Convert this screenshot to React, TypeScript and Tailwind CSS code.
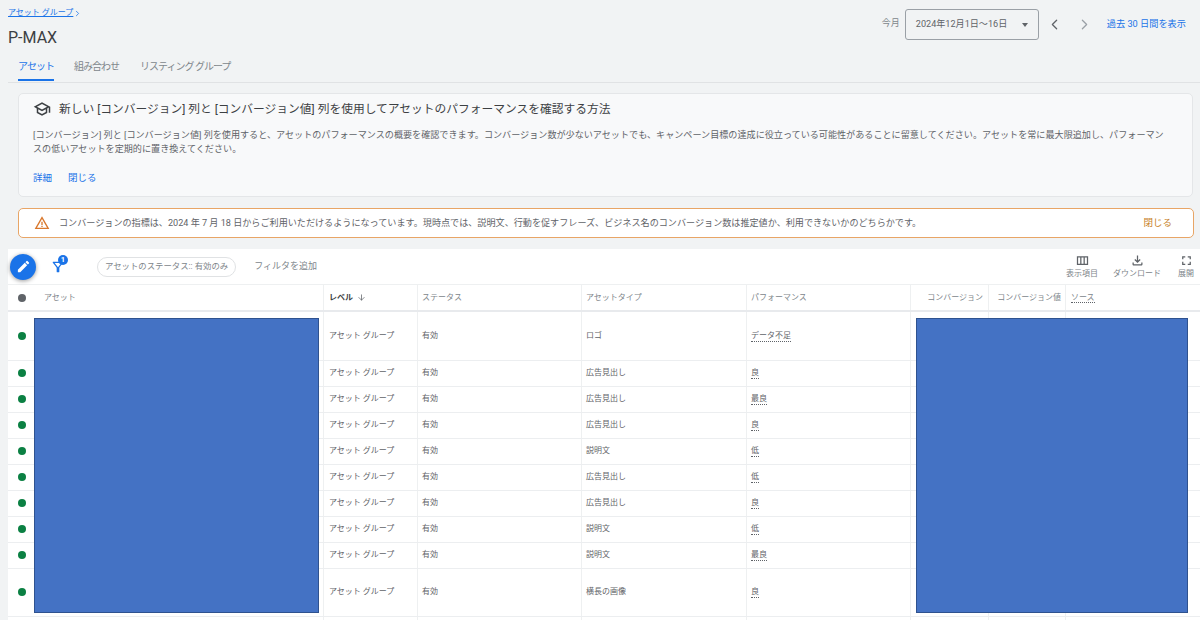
import { ChevronLeft, ChevronRight, ArrowDown } from 'lucide-react';
import { MdEdit, MdOutlineFileDownload, MdFullscreen, MdOutlineFilterAlt, MdOutlineSchool, MdOutlineViewColumn, MdWarningAmber } from 'react-icons/md';

const rows = [
  { type: 'ロゴ', perf: 'データ不足', tall: true },
  { type: '広告見出し', perf: '良' },
  { type: '広告見出し', perf: '最良' },
  { type: '広告見出し', perf: '良' },
  { type: '説明文', perf: '低' },
  { type: '広告見出し', perf: '低' },
  { type: '広告見出し', perf: '良' },
  { type: '説明文', perf: '低' },
  { type: '説明文', perf: '最良' },
  { type: '横長の画像', perf: '良', tall: true },
];

const gridCols = 'grid grid-cols-[315px_94px_164px_165px_164px_78px_77px_135px]';

const App = () => {
  return (
    <div className="w-[1200px] h-[620px] overflow-hidden bg-[#f1f3f4] font-['Roboto','Noto_Sans_CJK_JP',sans-serif] text-[#5f6368]">
      {/* Header */}
      <div className="h-[83px] ml-2 flex justify-between border-b border-[#e0e2e4]">
        <div>
          <div className="pt-[6px] flex items-center text-[8px] leading-[14px] text-[#1a73e8]">
            <span className="underline">アセット グループ</span>
            <ChevronRight size={9} strokeWidth={2} />
          </div>
          <div className="mt-[7px] text-[16px] leading-[22px] text-[#3c4043]">P-MAX</div>
          <div className="mt-[8px] flex text-[10px] tracking-[-1px] leading-[20px] whitespace-nowrap">
            <div className="ml-[10px] w-[36px] h-[24px] text-[#1a73e8] border-b-2 border-[#1a73e8] text-center">アセット</div>
            <div className="ml-[20px] text-[#80868b]">組み合わせ</div>
            <div className="ml-[21px] text-[#80868b]">リスティング グループ</div>
          </div>
        </div>
        <div className="flex items-start pt-[9px] pr-[14px]">
          <span className="mt-[7px] text-[9px] leading-[14px] text-[#80868b]">今月</span>
          <div className="ml-[5px] w-[134px] h-[31px] flex items-center justify-between pl-[10px] pr-[10px] border border-[#9aa0a6] rounded-[3px] text-[9.1px] whitespace-nowrap">
            <span>2024年12月1日～16日</span>
            <span className="w-0 h-0 border-x-[3.5px] border-x-transparent border-t-[4px] border-t-[#5f6368]" />
          </div>
          <ChevronLeft className="ml-[7px] mt-[7px]" size={17} strokeWidth={1.8} color="#5f6368" />
          <ChevronRight className="ml-[13px] mt-[7px]" size={17} strokeWidth={1.8} color="#9aa0a6" />
          <span className="ml-[14px] mt-[8px] text-[9.2px] leading-[14px] text-[#1a73e8] whitespace-nowrap">過去 30 日間を表示</span>
        </div>
      </div>

      {/* Info card */}
      <div className="mt-[10px] ml-[18px] w-[1175px] h-[104px] bg-[#f8f9fa] border border-[#e4e6e8] rounded-[5px] pl-[14px]">
        <div className="pt-[6px] flex items-center text-[11.75px] leading-[18px] text-[#3c4043]">
          <MdOutlineSchool size={18} color="#3c4043" />
          <span className="ml-[8px]">新しい [コンバージョン] 列と [コンバージョン値] 列を使用してアセットのパフォーマンスを確認する方法</span>
        </div>
        <p className="mt-[10px] w-[1136px] text-[9.1px] leading-[14px]">
          [コンバージョン] 列と [コンバージョン値] 列を使用すると、アセットのパフォーマンスの概要を確認できます。コンバージョン数が少ないアセットでも、キャンペーン目標の達成に役立っている可能性があることに留意してください。アセットを常に最大限追加し、パフォーマンスの低いアセットを定期的に置き換えてください。
        </p>
        <div className="mt-[15px] flex gap-[16px] text-[9.5px] leading-[14px] text-[#1a73e8]">
          <span>詳細</span>
          <span>閉じる</span>
        </div>
      </div>

      {/* Warning */}
      <div className="mt-[11px] ml-[18px] w-[1176px] h-[30px] bg-white border border-[#e8a566] rounded-[5px] flex items-center pl-[15px] pr-[21px] text-[9.1px]">
        <MdWarningAmber size={16} color="#d9782d" />
        <span className="ml-[9px] mt-[1px]">コンバージョンの指標は、2024 年 7 月 18 日からご利用いただけるようになっています。現時点では、説明文、行動を促すフレーズ、ビジネス名のコンバージョン数は推定値か、利用できないかのどちらかです。</span>
        <span className="ml-auto mt-[1px] text-[9.5px] text-[#c77f2a]">閉じる</span>
      </div>

      {/* Table panel */}
      <div className="relative mt-[11px] ml-2 bg-white">
        <div className="h-[36px] flex items-center border-b border-[#eef0f1]">
          <div className="ml-[2px] w-[26px] h-[26px] rounded-full bg-[#1a73e8] shadow-[0_1px_4px_rgba(0,0,0,0.4)] flex items-center justify-center">
            <MdEdit size={15} color="#ffffff" />
          </div>
          <div className="relative ml-[14px] w-[16px] h-[16px]">
            <MdOutlineFilterAlt size={16} color="#1a73e8" />
            <span className="absolute -top-[4px] left-[8px] w-[10px] h-[10px] rounded-full bg-[#1a73e8] text-white text-[7.5px] leading-[10px] text-center font-bold">1</span>
          </div>
          <div className="ml-[31px] h-[20px] px-[7px] flex items-center rounded-full border border-[#e0e2e4] text-[8.4px] text-[#80868b] whitespace-nowrap">アセットのステータス:: 有効のみ</div>
          <span className="ml-[18px] text-[9px] text-[#80868b]">フィルタを追加</span>
          <div className="ml-auto flex items-start text-[8px] leading-[12px] text-[#80868b]">
            <div className="flex flex-col items-center">
              <MdOutlineViewColumn size={15} color="#5f6368" />
              <span>表示項目</span>
            </div>
            <div className="ml-[15px] flex flex-col items-center">
              <MdOutlineFileDownload size={15} color="#5f6368" />
              <span>ダウンロード</span>
            </div>
            <div className="ml-[17px] mr-[6px] flex flex-col items-center">
              <MdFullscreen size={15} color="#5f6368" />
              <span>展開</span>
            </div>
          </div>
        </div>

        <div className={`${gridCols} h-[27px] border-b-2 border-[#e8eaed] text-[8px] leading-[25px] text-[#80868b] whitespace-nowrap`}>
          <div className="flex items-center">
            <span className="ml-[10px] w-[8px] h-[8px] rounded-full bg-[#5f6368]" />
            <span className="ml-[18px]">アセット</span>
          </div>
          <div className="border-l border-[#eef0f1] pl-[5px] flex items-center gap-[4px] font-bold text-[#3c4043]">
            レベル <ArrowDown size={9} color="#5f6368" />
          </div>
          <div className="border-l border-[#eef0f1] pl-[4px]">ステータス</div>
          <div className="border-l border-[#eef0f1] pl-[4px]">アセットタイプ</div>
          <div className="border-l border-[#eef0f1] pl-[4px]">パフォーマンス</div>
          <div className="border-l border-[#eef0f1] pr-[5px] text-right">コンバージョン</div>
          <div className="border-l border-[#eef0f1] pr-[4px] text-right">コンバージョン値</div>
          <div className="border-l border-[#eef0f1] pl-[5px]">
            <span className="border-b border-dotted border-[#5f6368]">ソース</span>
          </div>
        </div>

        {rows.map((row, i) => (
          <div
            key={i}
            className={`${gridCols} ${row.tall ? 'h-[48.5px]' : 'h-[26px]'} border-b border-[#eceef0] text-[8px] text-[#5f6368] whitespace-nowrap`}
          >
            <div className="flex items-center">
              <span className="ml-[10px] w-[8px] h-[8px] rounded-full bg-[#0b8043]" />
            </div>
            <div className="border-l border-[#eef0f1] pl-[5px] flex items-center">アセット グループ</div>
            <div className="border-l border-[#eef0f1] pl-[4px] flex items-center">有効</div>
            <div className="border-l border-[#eef0f1] pl-[4px] flex items-center">{row.type}</div>
            <div className="border-l border-[#eef0f1] pl-[4px] flex items-center">
              <span className="border-b border-dotted border-[#5f6368] leading-[11px]">{row.perf}</span>
            </div>
            <div className="border-l border-[#eef0f1]" />
            <div className="border-l border-[#eef0f1]" />
            <div className="border-l border-[#eef0f1]" />
          </div>
        ))}
        <div className={`${gridCols} h-[26px]`}>
          <div />
          <div className="border-l border-[#eef0f1]" />
          <div className="border-l border-[#eef0f1]" />
          <div className="border-l border-[#eef0f1]" />
          <div className="border-l border-[#eef0f1]" />
          <div className="border-l border-[#eef0f1]" />
          <div className="border-l border-[#eef0f1]" />
          <div className="border-l border-[#eef0f1]" />
        </div>

        {/* masked areas over the table */}
        <div className="absolute left-[26px] top-[69px] w-[285px] h-[295px] bg-[#4472c4] border border-[#2f528f]" />
        <div className="absolute left-[908px] top-[69px] w-[272px] h-[295px] bg-[#4472c4] border border-[#2f528f]" />
      </div>
    </div>
  );
};

export default App;
